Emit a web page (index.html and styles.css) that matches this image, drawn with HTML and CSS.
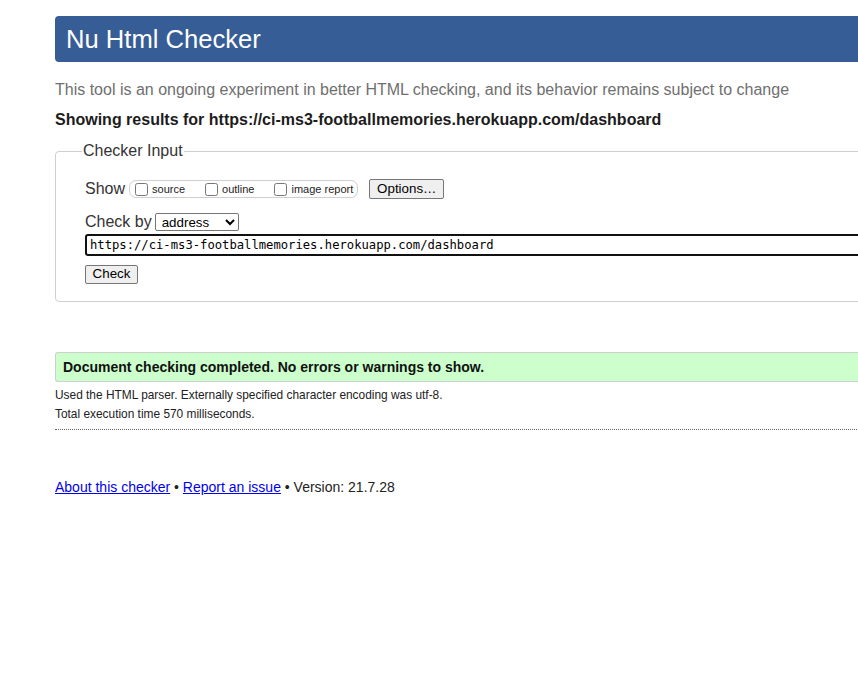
FILE: index.html
```html
<!DOCTYPE html>
<html lang="en">
<head>
<meta charset="utf-8">
<title>Nu Html Checker</title>
<link rel="stylesheet" href="styles.css">
</head>
<body>
<div class="page">
  <h1 class="title">Nu Html Checker</h1>
  <p class="intro">This tool is an ongoing experiment in better HTML checking, and its behavior remains subject to change</p>
  <p class="showing">Showing results for https://ci-ms3-footballmemories.herokuapp.com/dashboard</p>
  <form class="checker-form">
    <fieldset class="checker-fs">
      <legend class="checker-legend">Checker Input</legend>
      <div class="row show-row">
        <span class="row-label">Show</span>
        <span class="show-group">
          <label class="opt"><input type="checkbox" class="cb">source</label>
          <label class="opt"><input type="checkbox" class="cb">outline</label>
          <label class="opt"><input type="checkbox" class="cb">image report</label>
        </span>
        <button type="button" class="btn options-btn">Options…</button>
      </div>
      <div class="row by-row">
        <span class="row-label">Check by</span>
        <select class="by-select"><option>address</option></select>
      </div>
      <div class="url-row">
        <input class="url" type="text" value="https://ci-ms3-footballmemories.herokuapp.com/dashboard">
      </div>
      <div class="submit-row">
        <button type="button" class="btn check-btn">Check</button>
      </div>
    </fieldset>
  </form>
  <div class="success">Document checking completed. No errors or warnings to show.</div>
  <p class="details first">Used the HTML parser. Externally specified character encoding was utf-8.</p>
  <p class="details">Total execution time 570 milliseconds.</p>
  <hr class="dotted">
  <p class="footer"><a href="#" class="flink">About this checker</a> • <a href="#" class="flink">Report an issue</a> • Version: 21.7.28</p>
</div>
</body>
</html>
```

FILE: styles.css
```css
html, body {
  margin: 0;
  padding: 0;
  background: #fff;
  overflow: hidden;
}
body {
  font-family: "Liberation Sans", Arial, sans-serif;
  color: #222;
}
.page {
  margin-left: 55px;
  width: 830px;
  padding-top: 16px;
}
.title {
  margin: 0;
  height: 46px;
  box-sizing: border-box;
  padding-left: 11px;
  background: #365d95;
  color: #fff;
  font-weight: normal;
  font-size: 25.6px;
  line-height: 46px;
  border-radius: 4px 0 0 4px;
}
.intro {
  margin: 18px 0 0;
  font-size: 16px;
  line-height: 20px;
  color: #6f6f6f;
}
.showing {
  margin: 10px 0 0;
  font-size: 16px;
  line-height: 20px;
  font-weight: bold;
  color: #1c1c1c;
}
.checker-form {
  margin: 12px 0 0;
}
.checker-fs {
  margin: 0;
  padding: 8px 0 17px 29px;
  border: 1px solid #cfcfcf;
  border-radius: 4px;
}
.checker-legend {
  margin-left: -3px;
  padding: 0 1px;
  font-size: 16px;
  color: #333;
}
.row {
  display: flex;
  align-items: center;
}
.row-label {
  font-size: 16px;
  color: #333;
}
.show-row {
  margin-top: 11px;
  height: 20px;
}
.show-group {
  display: flex;
  align-items: center;
  margin-left: 4px;
  height: 16px;
  padding: 0 4px 0 1px;
  border: 1px solid #cfcfcf;
  border-radius: 7px;
}
.opt {
  display: flex;
  align-items: center;
  font-size: 11px;
  color: #222;
  margin-right: 16px;
}
.opt:last-child {
  margin-right: 0;
}
.cb {
  margin: 0 4px 0 4px;
  width: 13px;
  height: 13px;
}
.btn {
  font-family: "Liberation Sans", Arial, sans-serif;
  font-size: 13.33px;
  background: #efefef;
  border: 1px solid #767676;
  border-radius: 2px;
  color: #000;
  padding: 1px 7px;
  line-height: 16px;
}
.options-btn {
  margin-left: 11px;
  height: 20px;
  width: 75px;
  padding: 0;
}
.by-row {
  margin-top: 14px;
}
.by-select {
  margin-left: 3px;
  width: 84px;
  height: 18px;
  font-family: "Liberation Sans", Arial, sans-serif;
  font-size: 13.33px;
  border: 1px solid #767676;
  border-radius: 2px;
  background: #fff;
  color: #000;
  padding: 0 0 0 2px;
}
.url-row {
  margin-top: 3px;
}
.url {
  display: block;
  box-sizing: border-box;
  width: 100%;
  height: 22px;
  border: 2px solid #111;
  border-radius: 3px;
  padding: 0 3px;
  font-family: "DejaVu Sans Mono", "Liberation Mono", monospace;
  font-size: 12.2px;
  color: #000;
  outline: none;
}
.submit-row {
  margin-top: 8px;
}
.check-btn {
  width: 53px;
  height: 19px;
  padding: 0;
}
.success {
  margin-top: 50px;
  height: 30px;
  box-sizing: border-box;
  border: 1px solid #cfcfcf;
  border-right: none;
  border-radius: 3px 0 0 3px;
  background: #ccffcc;
  padding-left: 7px;
  font-size: 14px;
  font-weight: bold;
  line-height: 28px;
  color: #111;
}
.details {
  margin: 0;
  font-size: 11.9px;
  line-height: 19px;
  color: #222;
}
.details.first {
  margin-top: 4px;
}
.dotted {
  margin: 5px 0 0;
  border: none;
  border-top: 1px dotted #666;
  height: 0;
}
.footer {
  margin: 48px 0 0;
  font-size: 14px;
  line-height: 18px;
  color: #222;
}
.flink {
  color: #0000ee;
}
```
